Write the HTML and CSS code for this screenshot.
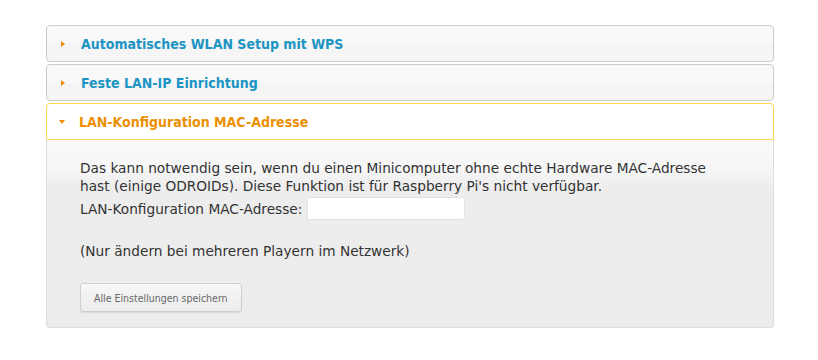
FILE: index.html
```html
<!DOCTYPE html>
<html lang="de">
<head>
    <meta charset="UTF-8">
    <title>Einstellungen</title>
    <link rel="stylesheet" href="styles.css">
</head>
<body>
    <div class="accordion">
        <h3 class="acc-header">
            <span class="acc-icon"></span>Automatisches WLAN Setup mit WPS
        </h3>
        <h3 class="acc-header">
            <span class="acc-icon"></span>Feste LAN-IP Einrichtung
        </h3>
        <h3 class="acc-header active">
            <span class="acc-icon"></span>LAN-Konfiguration MAC-Adresse
        </h3>
        <div class="acc-content">
            <p class="info">Das kann notwendig sein, wenn du einen Minicomputer ohne echte Hardware MAC-Adresse hast (einige ODROIDs). Diese Funktion ist für Raspberry Pi's nicht verfügbar.</p>
            <div class="mac-row">
                <label for="mac">LAN-Konfiguration MAC-Adresse:</label>
                <input type="text" id="mac" class="mac-input">
            </div>
            <p class="hint">(Nur ändern bei mehreren Playern im Netzwerk)</p>
            <button class="save-btn">Alle Einstellungen speichern</button>
        </div>
    </div>
</body>
</html>
```

FILE: styles.css
```css
body {
    margin: 0;
    padding: 25px 45px 0 46px;
    background: #fff;
    font-family: "DejaVu Sans Condensed", "DejaVu Sans", sans-serif;
}
.accordion {
    width: 728px;
    display: flex;
    flex-direction: column;
}
.acc-header {
    display: flex;
    align-items: center;
    height: 35px;
    margin: 0 0 2px 0;
    padding: 0 0 0 14px;
    border: 1px solid #cccccc;
    border-radius: 4px;
    background: linear-gradient(to bottom, #f9f9f9 0, #f9f9f9 50%, #f4f4f4 50%, #f6f6f6 100%);
    color: #1c94c4;
    font-size: 14px;
    font-weight: bold;
}
.acc-icon {
    width: 0;
    height: 0;
    margin-right: 16px;
    border-top: 3px solid transparent;
    border-bottom: 3px solid transparent;
    border-left: 4px solid #ef8c08;
}
.acc-header.active {
    margin-bottom: 0;
    border-color: #fbd850;
    border-radius: 4px 4px 0 0;
    background: #ffffff;
    color: #eb8f00;
}
.acc-header.active .acc-icon {
    margin-left: -2px;
    margin-right: 14px;
    border-left: 3px solid transparent;
    border-right: 3px solid transparent;
    border-top: 4px solid #ef8c08;
    border-bottom: 0;
}
.acc-content {
    padding: 19px 40px 15px 33px;
    border: 1px solid #dddddd;
    border-top: 0;
    border-radius: 0 0 4px 4px;
    background: linear-gradient(to bottom, #f9f9f9 0, #f6f6f6 30px, #ededed 48px, #ececec 100%);
    color: #333333;
    font-family: "DejaVu Sans", sans-serif;
    font-size: 13.7px;
    line-height: 18px;
}
.info {
    margin: 0;
}
.mac-row {
    display: flex;
    align-items: center;
    gap: 5px;
    margin-top: 2px;
}
.mac-input {
    width: 156px;
    height: 21px;
    padding: 0;
    border: 1px solid #e2e2e2;
    border-radius: 2px;
    background: #fff;
}
.hint {
    margin: 22px 0 23px 0;
}
.save-btn {
    display: block;
    height: 29px;
    padding: 0 13px;
    border: 1px solid #cfcfcf;
    border-radius: 3px;
    background: linear-gradient(to bottom, #f7f7f7, #ececec);
    box-shadow: 0 1px 1px rgba(0, 0, 0, 0.08);
    color: #666666;
    font-family: "DejaVu Sans Condensed", sans-serif;
    font-size: 10.5px;
}
```
